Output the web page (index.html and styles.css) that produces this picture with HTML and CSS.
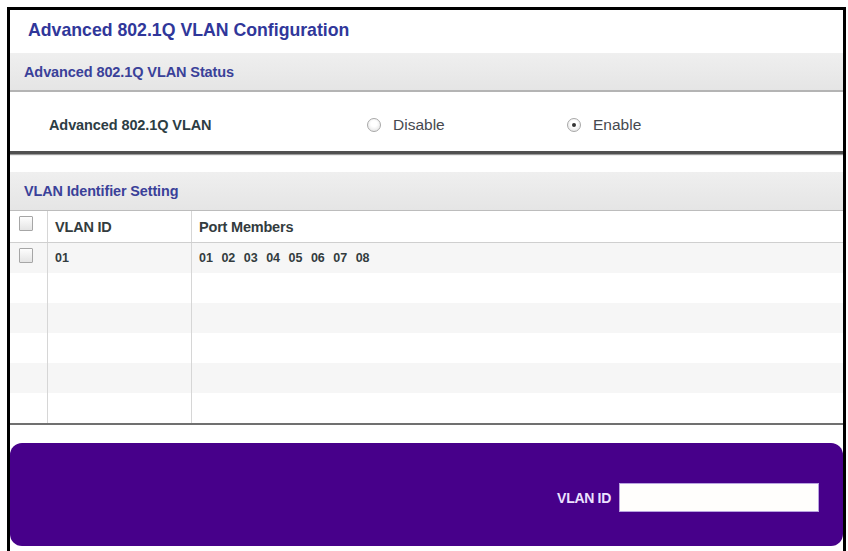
FILE: index.html
```html
<!DOCTYPE html>
<html>
<head>
<meta charset="utf-8">
<link rel="stylesheet" href="styles.css">
</head>
<body>
<div class="frame">
  <div class="title">Advanced 802.1Q VLAN Configuration</div>
  <div class="bar bar-status">Advanced 802.1Q VLAN Status</div>
  <div class="status-row">
    <span class="row-label">Advanced 802.1Q VLAN</span>
    <span class="opt"><span class="radio"></span>Disable</span>
    <span class="opt"><span class="radio checked"></span>Enable</span>
  </div>
  <div class="bar bar-ident">VLAN Identifier Setting</div>
  <div class="table">
    <div class="tr th">
      <div class="td c1"><span class="chk"></span></div>
      <div class="td c2">VLAN ID</div>
      <div class="td c3">Port Members</div>
    </div>
    <div class="tr odd">
      <div class="td c1"><span class="chk"></span></div>
      <div class="td c2 data">01</div>
      <div class="td c3 data ports">01 02 03 04 05 06 07 08</div>
    </div>
    <div class="tr"><div class="td c1"></div><div class="td c2"></div><div class="td c3"></div></div>
    <div class="tr odd"><div class="td c1"></div><div class="td c2"></div><div class="td c3"></div></div>
    <div class="tr"><div class="td c1"></div><div class="td c2"></div><div class="td c3"></div></div>
    <div class="tr odd"><div class="td c1"></div><div class="td c2"></div><div class="td c3"></div></div>
    <div class="tr"><div class="td c1"></div><div class="td c2"></div><div class="td c3"></div></div>
  </div>
  <div class="panel">
    <label class="panel-label">VLAN ID</label>
    <span class="panel-input"></span>
  </div>
</div>
</body>
</html>
```

FILE: styles.css
```css
html, body {
  margin: 0;
  padding: 0;
  background: #ffffff;
}
body {
  font-family: "Liberation Sans", Arial, sans-serif;
}
.frame {
  margin: 7px 2px 0 7px;
  height: 544px;
  box-sizing: border-box;
  border: 3px solid #000;
  border-bottom: none;
  display: flex;
  flex-direction: column;
  overflow: hidden;
}
.title {
  height: 43px;
  box-sizing: border-box;
  padding: 0 0 2px 18px;
  display: flex;
  align-items: center;
  font-size: 17.7px;
  font-weight: bold;
  color: #30379a;
}
.bar {
  display: flex;
  align-items: center;
  padding-left: 14px;
  font-size: 14.5px;
  font-weight: bold;
  color: #3a4199;
  background: linear-gradient(#efefef, #e5e5e5);
  letter-spacing: -0.1px;
}
.bar-status {
  height: 39px;
  box-sizing: border-box;
  border-bottom: 2px solid #b4b4b4;
}
.status-row {
  height: 62px;
  box-sizing: border-box;
  padding: 6px 0 0 39px;
  display: grid;
  grid-template-columns: 318px 200px 1fr;
  align-items: center;
  border-bottom: 3px solid #505050;
  box-shadow: 0 1px 1px #9a9a9a;
}
.row-label {
  font-size: 14.5px;
  font-weight: bold;
  color: #2d3d44;
  letter-spacing: -0.1px;
}
.opt {
  display: flex;
  align-items: center;
  font-size: 15.5px;
  color: #46494f;
}
.radio {
  width: 14px;
  height: 14px;
  box-sizing: border-box;
  border: 1px solid #a8a8a8;
  border-radius: 50%;
  background: radial-gradient(circle at 50% 40%, #ffffff 30%, #dedede 100%);
  margin-right: 12px;
  display: flex;
  align-items: center;
  justify-content: center;
}
.radio.checked::after {
  content: "";
  width: 4px;
  height: 4px;
  border-radius: 50%;
  background: #333;
}
.bar-ident {
  margin-top: 18px;
  height: 39px;
  box-sizing: border-box;
  border-bottom: 1px solid #bcbcbc;
  font-size: 14.4px;
}
.table {
  border-bottom: 2px solid #707070;
}
.tr {
  display: grid;
  grid-template-columns: 38px 144px 1fr;
  height: 30px;
}
.tr.th {
  height: 32px;
  border-bottom: 1px solid #cfcfcf;
  box-sizing: border-box;
}
.tr.odd {
  background: #f6f6f6;
}
.td {
  display: flex;
  align-items: center;
  padding-left: 7px;
  font-size: 14.5px;
  font-weight: bold;
  color: #333c3e;
  letter-spacing: -0.2px;
}
.td.c1 {
  padding-left: 9px;
}
.td.c1, .td.c2 {
  border-right: 1px solid #d6d6d6;
}
.td.data {
  font-size: 12.5px;
  letter-spacing: 0;
}
.ports {
  word-spacing: 5px;
}
.chk {
  width: 14px;
  height: 15px;
  box-sizing: border-box;
  border: 1px solid #a6a6a6;
  border-radius: 1px;
  background: linear-gradient(#fdfdfd, #e4e4e4);
  margin-bottom: 6px;
}
.panel {
  margin-top: 18px;
  height: 103px;
  box-sizing: border-box;
  border-radius: 12px;
  background: #47008a;
  display: flex;
  justify-content: flex-end;
  align-items: center;
  padding: 6px 25px 0 0;
}
.panel-label {
  font-size: 14px;
  font-weight: bold;
  color: #ece2ff;
  letter-spacing: -0.3px;
  margin-right: 9px;
}
.panel-input {
  width: 198px;
  height: 27px;
  background: #fffefc;
  box-shadow: 0 0 0 1px #b9a3e0;
}
```
